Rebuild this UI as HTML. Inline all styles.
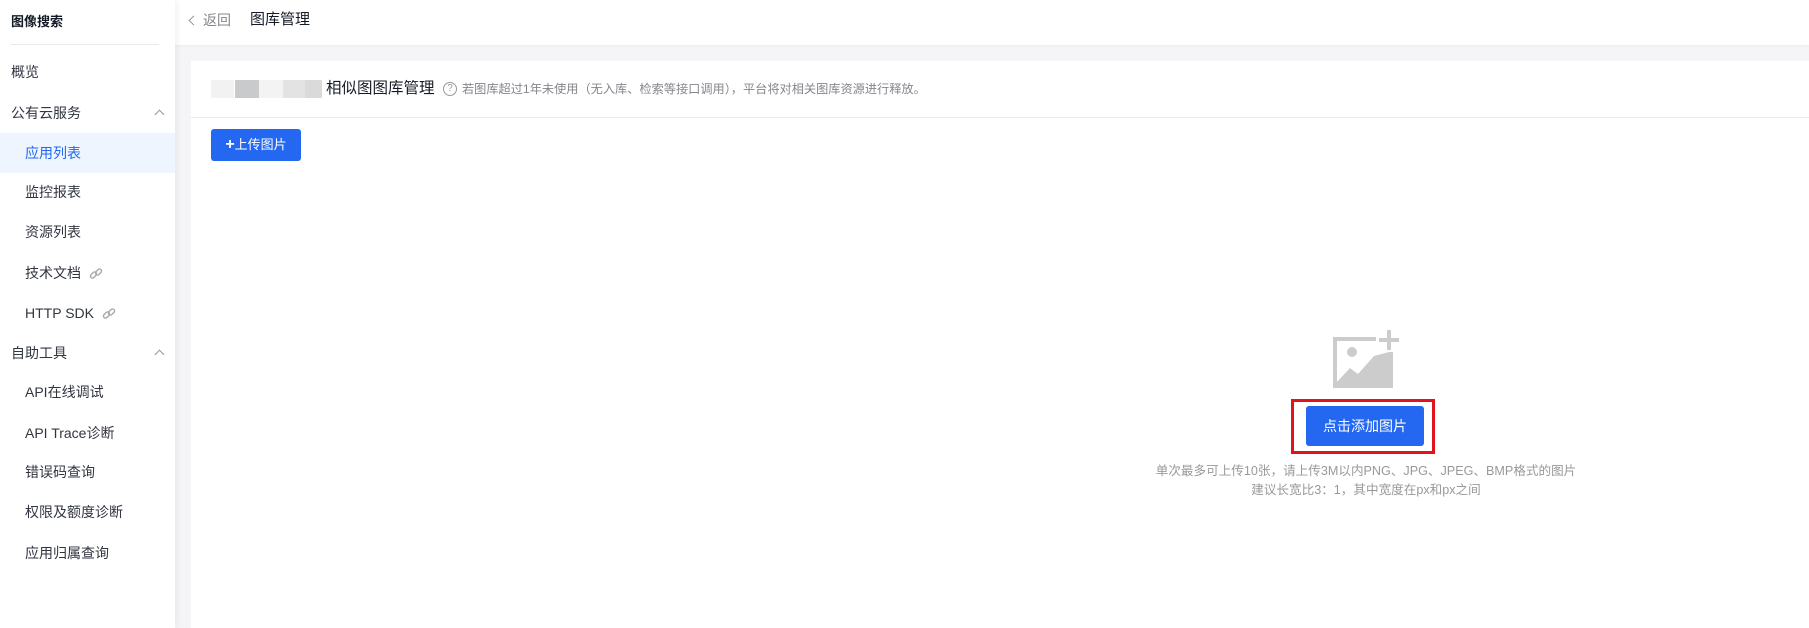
<!DOCTYPE html>
<html><head><meta charset="utf-8"><style>
*{margin:0;padding:0;box-sizing:border-box}
body{width:1809px;height:628px;background:#f5f5f7;font-family:"Liberation Sans","Noto Sans CJK SC",sans-serif;position:relative;overflow:hidden;color:#151b26}
.a{position:absolute;white-space:nowrap}
#side{position:absolute;left:0;top:0;width:175px;height:628px;background:#fff;box-shadow:2px 0 6px rgba(0,0,0,.06);z-index:2}
.it{position:absolute;font-size:14px;color:#303540;line-height:20px}
.sub{left:25px}.top{left:11px}
.car{position:absolute;right:12px;width:7px;height:7px;border-left:1.5px solid #999;border-top:1.5px solid #999;transform:rotate(45deg)}
</style></head><body>
<div id="side">
<div class="a" style="left:11px;top:11px;font-size:13px;font-weight:bold;color:#151b26">图像搜索</div>
<div class="a" style="left:11px;top:44px;width:148px;height:1px;background:#e8e9eb"></div>
<div class="it top" style="top:62px">概览</div>
<div class="it top" style="top:103px">公有云服务</div><div class="car" style="top:111px"></div>
<div class="a" style="left:0;top:133px;width:175px;height:40px;background:#eef5ff"></div>
<div class="it sub" style="top:143px;color:#2468f2">应用列表</div>
<div class="it sub" style="top:182px">监控报表</div>
<div class="it sub" style="top:222px">资源列表</div>
<div class="it sub" style="top:263px">技术文档 <svg width="14" height="14" viewBox="0 0 14 14" style="vertical-align:-3px;margin-left:4px"><g fill="none" stroke="#aaa" stroke-width="1.4"><rect x="1" y="6" width="7" height="4" rx="2" transform="rotate(-45 4.5 8)"/><rect x="6" y="3" width="7" height="4" rx="2" transform="rotate(-45 9.5 5)"/></g></svg></div>
<div class="it sub" style="top:303px">HTTP SDK <svg width="14" height="14" viewBox="0 0 14 14" style="vertical-align:-3px;margin-left:4px"><g fill="none" stroke="#aaa" stroke-width="1.4"><rect x="1" y="6" width="7" height="4" rx="2" transform="rotate(-45 4.5 8)"/><rect x="6" y="3" width="7" height="4" rx="2" transform="rotate(-45 9.5 5)"/></g></svg></div>
<div class="it top" style="top:343px">自助工具</div><div class="car" style="top:351px"></div>
<div class="it sub" style="top:382px">API在线调试</div>
<div class="it sub" style="top:423px">API Trace诊断</div>
<div class="it sub" style="top:462px">错误码查询</div>
<div class="it sub" style="top:502px">权限及额度诊断</div>
<div class="it sub" style="top:543px">应用归属查询</div>
</div>
<div class="a" style="left:175px;top:0;width:1634px;height:45px;background:#fff;box-shadow:0 1px 3px rgba(0,0,0,.04)"></div>
<div class="a" style="left:190px;top:10px;font-size:14px;color:#84868c;line-height:20px"><span style="display:inline-block;width:7px;height:7px;border-left:1.3px solid #999;border-bottom:1.3px solid #999;transform:rotate(45deg);margin-right:6px;vertical-align:1px"></span>返回</div>
<div class="a" style="left:250px;top:9px;font-size:15px;color:#151b26;line-height:21px">图库管理</div>
<div class="a" style="left:191px;top:61px;width:1618px;height:567px;background:#fff"></div>
<div class="a" style="left:211px;top:80px;width:23px;height:18px;background:#f2f2f2"></div>
<div class="a" style="left:235px;top:80px;width:24px;height:18px;background:#c9cacc"></div>
<div class="a" style="left:259px;top:80px;width:24px;height:18px;background:#f3f3f3"></div>
<div class="a" style="left:283px;top:80px;width:22px;height:18px;background:#e3e3e3"></div>
<div class="a" style="left:305px;top:80px;width:17px;height:18px;background:#dadada"></div>
<div class="a" style="left:326px;top:77.5px;font-size:15.5px;line-height:22px;color:#151b26">相似图图库管理</div>
<div class="a" style="left:443px;top:82px;width:14px;height:14px;border:1.2px solid #999;border-radius:50%;font-size:10px;color:#999;text-align:center;line-height:12px">?</div>
<div class="a" style="left:462px;top:81px;font-size:12.2px;color:#84868c;line-height:16px">若图库超过1年未使用（无入库、检索等接口调用），平台将对相关图库资源进行释放。</div>
<div class="a" style="left:191px;top:117px;width:1618px;height:1px;background:#e8e9eb"></div>
<div class="a" style="left:211px;top:129px;width:90px;height:32px;background:#2468f2;border-radius:3px;color:#fff;font-size:13px;line-height:32px;text-align:center"><b style="font-size:16px">+</b>上传图片</div>
<svg class="a" style="left:1330px;top:328px" width="70" height="62" viewBox="0 0 70 62"><g fill="none" stroke="#ccc" stroke-width="4"><path d="M46 11H5V58H61V24"/><path d="M59 2V22M49 12H69"/></g><circle cx="22" cy="24" r="5" fill="#ccc"/><path d="M5 56L20 40L28 46L44 28L59 24V58H5Z" fill="#ccc"/></svg>
<div class="a" style="left:1291px;top:399px;width:144px;height:55px;border:3px solid #e0141e"></div>
<div class="a" style="left:1306px;top:406px;width:118px;height:40px;background:#2468f2;border-radius:3px;color:#fff;font-size:14px;line-height:40px;text-align:center">点击添加图片</div>
<div class="a" style="left:1116px;top:462px;width:500px;text-align:center;font-size:12.6px;color:#999;line-height:19px">单次最多可上传10张，请上传3M以内PNG、JPG、JPEG、BMP格式的图片<br>建议长宽比3：1，其中宽度在px和px之间</div>
</body></html>
